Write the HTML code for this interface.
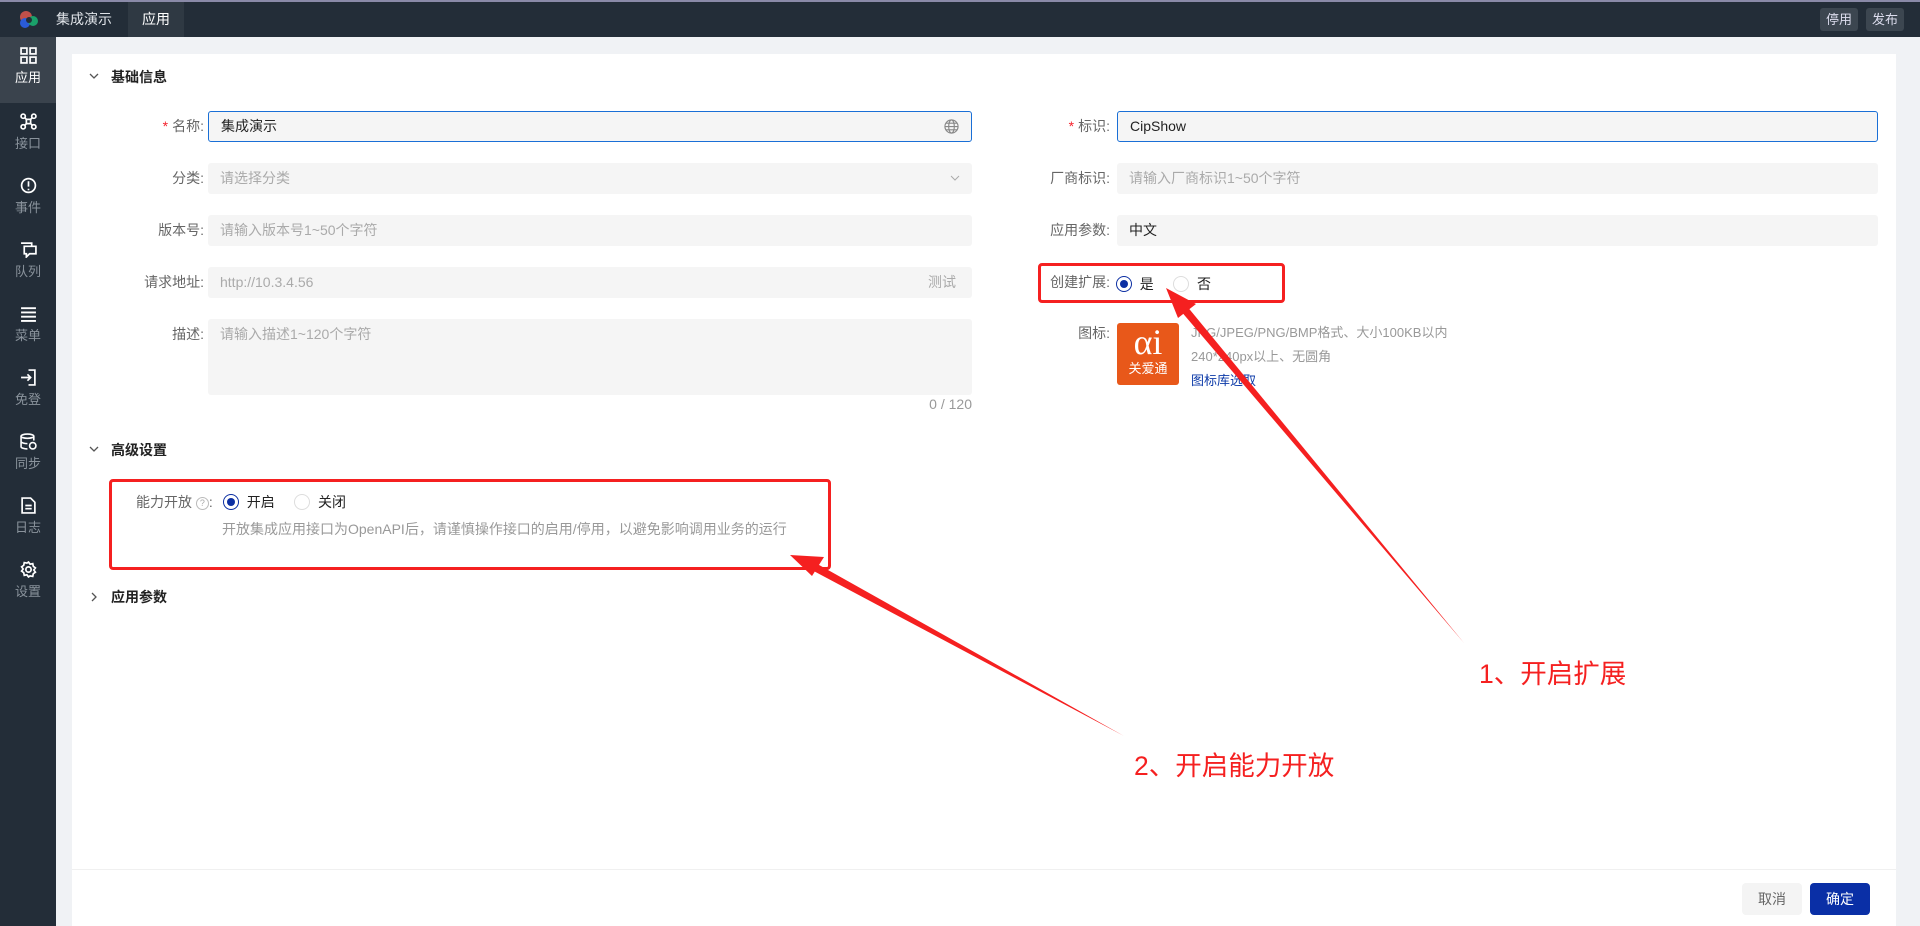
<!DOCTYPE html>
<html><head><meta charset="utf-8"><style>
*{margin:0;padding:0;box-sizing:border-box}
body{width:1920px;height:926px;overflow:hidden;background:#f0f2f5;font-family:"Liberation Sans","Noto Sans CJK SC",sans-serif;font-size:14px;color:#333;position:relative}
.top{position:absolute;left:0;top:0;width:1920px;height:37px;background:#232d38;border-top:2px solid #8a8aa8}
.top .t{position:absolute;top:0;height:35px;line-height:35px;color:#fff;font-size:14px}
.tb{position:absolute;top:6px;height:23px;line-height:23px;width:38px;text-align:center;background:#3c4650;color:#dde;border-radius:3px;font-size:13px}
.side{position:absolute;left:0;top:37px;width:56px;height:889px;background:#232d38}
.si{position:absolute;left:0;width:56px;height:64px;text-align:center;color:#8a939c;font-size:13px}
.si svg{display:block;margin:10px auto 3px}
.si.a{background:#3a434d;color:#fff}
.panel{position:absolute;left:72px;top:54px;width:1824px;height:872px;background:#fff}
.abs{position:absolute}
.h{font-weight:bold;font-size:14px;color:#222}
.lbl{position:absolute;text-align:right;color:#666;font-size:14px;line-height:31px;height:31px}
.inp{position:absolute;background:#f5f5f5;border-radius:3px;height:31px;line-height:31px;padding-left:12px;color:#aaa;font-size:14px}
.req{color:#f5222d;margin-right:4px}
.radio{display:inline-block;width:16px;height:16px;border-radius:50%;border:1px solid #ddd;vertical-align:-3px;background:#fff}
.radio.on{border:1px solid #0c2fa3;position:relative}
.radio.on:after{content:"";position:absolute;left:3px;top:3px;width:8px;height:8px;border-radius:50%;background:#0c2fa3}
.rb{position:absolute;border:3px solid #f52020;border-radius:4px}
.ann{position:absolute;color:#f52020;font-size:26.5px}
</style></head><body>
<div class="top">
<svg class="abs" style="left:18px;top:7px" width="22" height="22" viewBox="0 0 22 22"><circle cx="8" cy="8" r="6" fill="#c0504a"/><circle cx="7" cy="14" r="5" fill="#2a5bd7"/><circle cx="15" cy="12" r="5" fill="#1aa06a"/><circle cx="11" cy="11" r="3" fill="#232d38"/></svg>
<div class="t" style="left:56px;color:#dfe3e8">集成演示</div>
<div class="t" style="left:128px;width:56px;background:#2f3943;text-align:center">应用</div>
<div class="tb" style="left:1820px">停用</div>
<div class="tb" style="left:1866px">发布</div>
</div>
<div class="side">
<div class="si a" style="top:0;height:66px"><svg width="17" height="17" viewBox="0 0 16 16" fill="none" stroke="#fff" stroke-width="1.6"><rect x="1" y="1" width="5.5" height="5.5"/><rect x="9.5" y="1" width="5.5" height="5.5"/><rect x="1" y="9.5" width="5.5" height="5.5"/><rect x="9.5" y="9.5" width="5.5" height="5.5"/></svg>应用</div>
<div class="si" style="top:66px"><svg width="17" height="17" viewBox="0 0 16 16" fill="none" stroke="#fff" stroke-width="1.6"><circle cx="3" cy="3" r="2"/><circle cx="13" cy="3" r="2"/><circle cx="3" cy="13" r="2"/><circle cx="13" cy="13" r="2"/><rect x="6" y="6" width="4" height="4"/><path d="M4.5 4.5L6 6M11.5 4.5L10 6M4.5 11.5L6 10M11.5 11.5L10 10"/></svg>接口</div>
<div class="si" style="top:130px"><svg width="17" height="17" viewBox="0 0 16 16" fill="none" stroke="#fff" stroke-width="1.6"><circle cx="8" cy="8" r="6.5"/><path d="M8 4v5M8 11v1.5"/></svg>事件</div>
<div class="si" style="top:194px"><svg width="17" height="17" viewBox="0 0 16 16" fill="none" stroke="#fff" stroke-width="1.6"><path d="M1 2h10v3M4 5h11v7H9l-3 3v-3H4z"/></svg>队列</div>
<div class="si" style="top:258px"><svg width="17" height="17" viewBox="0 0 16 16" fill="none" stroke="#fff" stroke-width="1.8"><path d="M1 3h14M1 7h14M1 11h14M1 15h14"/></svg>菜单</div>
<div class="si" style="top:322px"><svg width="17" height="17" viewBox="0 0 16 16" fill="none" stroke="#fff" stroke-width="1.6"><path d="M8 1h6v14H8M1 8h9M7 5l3 3-3 3"/></svg>免登</div>
<div class="si" style="top:386px"><svg width="17" height="17" viewBox="0 0 16 16" fill="none" stroke="#fff" stroke-width="1.5"><ellipse cx="7" cy="3" rx="6" ry="2"/><path d="M1 3v10c0 1 3 2 6 2M13 3v4M1 8c0 1 3 2 6 2"/><circle cx="12" cy="12" r="3"/></svg>同步</div>
<div class="si" style="top:450px"><svg width="17" height="17" viewBox="0 0 16 16" fill="none" stroke="#fff" stroke-width="1.6"><path d="M2 1h8l4 4v10H2zM5 8h6M5 11h6"/></svg>日志</div>
<div class="si" style="top:514px"><svg width="17" height="17" viewBox="0 0 16 16" fill="none" stroke="#fff" stroke-width="1.6"><circle cx="8" cy="8" r="2.5"/><path d="M8 1l1.5 2 2.5-.5.5 2.5 2 1.5-1.5 2 1.5 2-2 1.5-.5 2.5-2.5-.5L8 15l-1.5-2-2.5.5-.5-2.5-2-1.5 1.5-2-1.5-2 2-1.5.5-2.5 2.5.5z"/></svg>设置</div>
</div>
<div class="panel"></div>
<svg class="abs" style="left:89px;top:72px" width="10" height="8"><path d="M1 2l4 4 4-4" stroke="#555" fill="none" stroke-width="1.3"/></svg>
<div class="abs h" style="left:111px;top:67px">基础信息</div>
<div class="lbl" style="left:100px;width:104px;top:111px"><span class="req">*</span>名称:</div>
<div class="inp" style="left:208px;top:111px;width:764px;border:1px solid #1a6fd6;color:#222;line-height:29px">集成演示
<svg class="abs" style="right:12px;top:7px" width="15" height="15" viewBox="0 0 16 16" fill="none" stroke="#888" stroke-width="1.2"><circle cx="8" cy="8" r="7"/><ellipse cx="8" cy="8" rx="3" ry="7"/><path d="M1 8h14M2 4.5h12M2 11.5h12"/></svg></div>
<div class="lbl" style="left:100px;width:104px;top:163px">分类:</div>
<div class="inp" style="left:208px;top:163px;width:764px">请选择分类<svg class="abs" style="right:12px;top:12px" width="10" height="7"><path d="M1 1l4 4 4-4" stroke="#aaa" fill="none"/></svg></div>
<div class="lbl" style="left:100px;width:104px;top:215px">版本号:</div>
<div class="inp" style="left:208px;top:215px;width:764px">请输入版本号1~50个字符</div>
<div class="lbl" style="left:100px;width:104px;top:267px">请求地址:</div>
<div class="inp" style="left:208px;top:267px;width:764px">http://10.3.4.56<span class="abs" style="right:16px">测试</span></div>
<div class="lbl" style="left:100px;width:104px;top:319px">描述:</div>
<div class="inp" style="left:208px;top:319px;width:764px;height:76px">请输入描述1~120个字符</div>
<div class="abs" style="left:900px;width:72px;text-align:right;top:396px;color:#999">0 / 120</div>

<div class="lbl" style="left:1000px;width:110px;top:111px"><span class="req">*</span>标识:</div>
<div class="inp" style="left:1117px;top:111px;width:761px;border:1px solid #1a6fd6;color:#222;line-height:29px">CipShow</div>
<div class="lbl" style="left:1000px;width:110px;top:163px">厂商标识:</div>
<div class="inp" style="left:1117px;top:163px;width:761px">请输入厂商标识1~50个字符</div>
<div class="lbl" style="left:1000px;width:110px;top:215px">应用参数:</div>
<div class="inp" style="left:1117px;top:215px;width:761px;color:#222">中文</div>
<div class="lbl" style="left:1000px;width:110px;top:267px">创建扩展:</div>
<div class="abs" style="left:1116px;top:274px;color:#222"><span class="radio on"></span>&nbsp; 是 &nbsp;&nbsp;&nbsp;&nbsp;<span class="radio"></span>&nbsp; 否</div>
<div class="rb" style="left:1038px;top:263px;width:247px;height:40px"></div>
<div class="lbl" style="left:1000px;width:110px;top:318px">图标:</div>
<div class="abs" style="left:1117px;top:323px;width:62px;height:62px;background:#e8581a;border-radius:3px;color:#fff;text-align:center">
<div style="font-family:'Liberation Serif',serif;font-size:36px;line-height:38px">αi</div><div style="font-size:13px;line-height:16px">关爱通</div></div>
<div class="abs" style="left:1191px;top:321px;color:#999;font-size:13px;line-height:24px">JPG/JPEG/PNG/BMP格式、大小100KB以内<br>240*240px以上、无圆角<br><span style="color:#0c3aa8">图标库选取</span></div>

<svg class="abs" style="left:89px;top:445px" width="10" height="8"><path d="M1 2l4 4 4-4" stroke="#555" fill="none" stroke-width="1.3"/></svg>
<div class="abs h" style="left:111px;top:440px">高级设置</div>
<div class="abs" style="left:136px;top:492px;color:#666">能力开放 <span style="display:inline-block;width:13px;height:13px;border:1px solid #bbb;border-radius:50%;font-size:9px;line-height:11px;text-align:center;color:#aaa;vertical-align:1px">?</span>:</div>
<div class="abs" style="left:223px;top:492px;color:#222"><span class="radio on"></span>&nbsp; 开启 &nbsp;&nbsp;&nbsp;&nbsp;<span class="radio"></span>&nbsp; 关闭</div>
<div class="abs" style="left:222px;top:519px;color:#999;font-size:14px">开放集成应用接口为OpenAPI后，请谨慎操作接口的启用/停用，以避免影响调用业务的运行</div>
<div class="rb" style="left:109px;top:479px;width:722px;height:91px"></div>

<svg class="abs" style="left:90px;top:592px" width="8" height="10"><path d="M2 1l4 4-4 4" stroke="#555" fill="none" stroke-width="1.3"/></svg>
<div class="abs h" style="left:111px;top:587px">应用参数</div>

<div class="abs" style="left:72px;top:869px;width:1824px;height:1px;background:#f0f0f0"></div>
<div class="abs" style="left:1742px;top:883px;width:60px;height:32px;line-height:32px;text-align:center;background:#f4f4f4;border-radius:4px;color:#666">取消</div>
<div class="abs" style="left:1810px;top:883px;width:60px;height:32px;line-height:32px;text-align:center;background:#0a2fa6;border-radius:4px;color:#fff">确定</div>

<svg class="abs" style="left:0;top:0" width="1920" height="926">
<polygon points="1464,643 1180,310 1186,305" fill="#f52020"/>
<polygon points="1166,288 1196,304 1178,318" fill="#f52020"/>
<polygon points="1124,736 808,568 812,561" fill="#f52020"/>
<polygon points="790,555 824,557 812,576" fill="#f52020"/>
</svg>
<div class="ann" style="left:1479px;top:652px">1、开启扩展</div>
<div class="ann" style="left:1134px;top:744px">2、开启能力开放</div>
</body></html>
